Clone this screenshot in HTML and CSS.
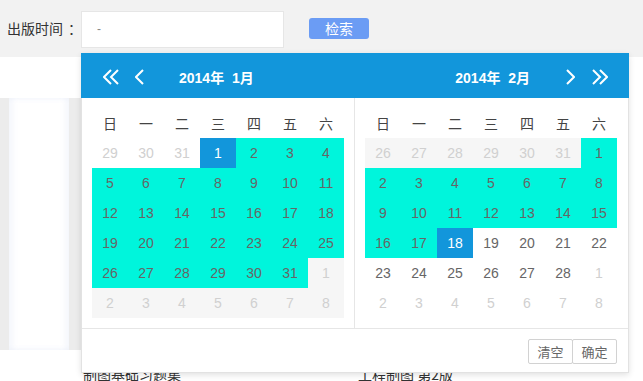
FILE: index.html
```html
<!DOCTYPE html>
<html lang="zh">
<head>
  <meta charset="UTF-8">
  <title>图书检索</title>
  <link rel="stylesheet" href="styles.css">
</head>
<body>
<div class="search-bar">
  <label class="search-label">出版时间<span class="colon">：</span></label>
  <div class="range-input"><span class="range-sep">-</span></div>
  <button class="search-btn">检索</button>
</div>
<div class="strip"></div>

<div class="shelf">
  <div class="shelf-row">
    <div class="cover cover-edge"></div>
    <div class="gutter"></div>
    <div class="cover"></div>
    <div class="gutter"></div>
    <div class="cover"></div>
    <div class="gutter"></div>
  </div>
  <div class="titles">
    <div class="title title-1">制图基础习题集</div>
    <div class="title title-2">工程制图 第2版</div>
  </div>
</div>

<!-- 日期范围选择弹层 -->
<div class="picker">
  <div class="picker-head">
    <div class="head-half">
      <svg class="arrow-dbl" viewBox="0 0 16 16"><polyline points="8,1 1,8 8,15"/><polyline points="15,1 8,8 15,15"/></svg>
      <svg class="arrow-one prev" viewBox="0 0 9 16"><polyline points="8,1 1,8 8,15"/></svg>
      <span class="ym ym-left">2014年&nbsp;&nbsp;1月</span>
    </div>
    <div class="head-half head-right">
      <span class="ym">2014年&nbsp;&nbsp;2月</span>
      <svg class="arrow-one next" viewBox="0 0 9 16"><polyline points="1,1 8,8 1,15"/></svg>
      <svg class="arrow-dbl" viewBox="0 0 16 16"><polyline points="1,1 8,8 1,15"/><polyline points="8,1 15,8 8,15"/></svg>
    </div>
  </div>

  <div class="picker-body">
    <div class="panel panel-left">
      <div class="grid">
        <div class="wk">日</div><div class="wk">一</div><div class="wk">二</div><div class="wk">三</div><div class="wk">四</div><div class="wk">五</div><div class="wk">六</div>
        <div class="d o">29</div><div class="d o">30</div><div class="d o">31</div><div class="d sel">1</div><div class="d in">2</div><div class="d in">3</div><div class="d in">4</div>
        <div class="d in">5</div><div class="d in">6</div><div class="d in">7</div><div class="d in">8</div><div class="d in">9</div><div class="d in">10</div><div class="d in">11</div>
        <div class="d in">12</div><div class="d in">13</div><div class="d in">14</div><div class="d in">15</div><div class="d in">16</div><div class="d in">17</div><div class="d in">18</div>
        <div class="d in">19</div><div class="d in">20</div><div class="d in">21</div><div class="d in">22</div><div class="d in">23</div><div class="d in">24</div><div class="d in">25</div>
        <div class="d in">26</div><div class="d in">27</div><div class="d in">28</div><div class="d in">29</div><div class="d in">30</div><div class="d in">31</div><div class="d og">1</div>
        <div class="d og">2</div><div class="d og">3</div><div class="d og">4</div><div class="d og">5</div><div class="d og">6</div><div class="d og">7</div><div class="d og">8</div>
      </div>
    </div>
    <div class="panel panel-right">
      <div class="grid">
        <div class="wk">日</div><div class="wk">一</div><div class="wk">二</div><div class="wk">三</div><div class="wk">四</div><div class="wk">五</div><div class="wk">六</div>
        <div class="d og">26</div><div class="d og">27</div><div class="d og">28</div><div class="d og">29</div><div class="d og">30</div><div class="d og">31</div><div class="d in">1</div>
        <div class="d in">2</div><div class="d in">3</div><div class="d in">4</div><div class="d in">5</div><div class="d in">6</div><div class="d in">7</div><div class="d in">8</div>
        <div class="d in">9</div><div class="d in">10</div><div class="d in">11</div><div class="d in">12</div><div class="d in">13</div><div class="d in">14</div><div class="d in">15</div>
        <div class="d in">16</div><div class="d in">17</div><div class="d sel">18</div><div class="d">19</div><div class="d">20</div><div class="d">21</div><div class="d">22</div>
        <div class="d">23</div><div class="d">24</div><div class="d">25</div><div class="d">26</div><div class="d">27</div><div class="d">28</div><div class="d o">1</div>
        <div class="d o">2</div><div class="d o">3</div><div class="d o">4</div><div class="d o">5</div><div class="d o">6</div><div class="d o">7</div><div class="d o">8</div>
      </div>
    </div>
  </div>

  <div class="picker-foot">
    <span class="foot-btn">清空</span><span class="foot-btn">确定</span>
  </div>
</div>
</body>
</html>
```

FILE: styles.css
```css
* { box-sizing: border-box; }
body {
  margin: 0;
  font-family: "Liberation Sans", "Noto Sans CJK SC", sans-serif;
  font-size: 14px;
  color: #333;
  background: #fff;
  overflow: hidden;
  height: 381px;
  position: relative;
}
.search-bar {
  height: 57px;
  background: #f2f2f2;
  display: flex;
  align-items: center;
  padding-left: 7px;
}
.search-label {
  width: 74px;
  font-family: "Noto Sans CJK SC", sans-serif;
  font-size: 14px;
  color: #333;
  margin-top: -1px;
  white-space: nowrap;
}
.colon {
  margin-left: 5px;
}
.range-input {
  width: 203px;
  height: 37px;
  background: #fff;
  border: 1px solid #e6e6e6;
  display: flex;
  align-items: center;
  padding-left: 15px;
  margin-top: 1px;
}
.range-sep {
  color: #888;
  font-size: 12px;
}
.search-btn {
  margin-left: 25px;
  width: 60px;
  height: 21px;
  border: none;
  border-radius: 3px;
  background: #6b9cf4;
  color: #fff;
  font-family: "Noto Sans CJK SC", sans-serif;
  font-size: 14px;
  line-height: 21px;
  padding: 0;
  margin-top: -1px;
}
.strip {
  height: 41px;
}
.shelf-row {
  display: flex;
  height: 252px;
}
.cover {
  width: 215px;
  background: #ececec;
}
.cover-edge {
  width: 9px;
}
.gutter {
  width: 60px;
  background: #fff;
  box-shadow: inset 4px 0 5px rgba(215, 225, 245, 0.25), inset -4px 0 5px rgba(215, 225, 245, 0.25);
}
.titles {
  display: flex;
  padding-top: 14px;
  line-height: 20px;
}
.title {
  font-family: "Noto Sans CJK SC", sans-serif;
  color: #333;
}
.title-1 { margin-left: 83px; width: 275px; }

/* picker */
.picker {
  position: absolute;
  left: 81px;
  top: 53px;
  width: 548px;
  background: #fff;
  border: 1px solid #e2e2e2;
  border-top: none;
  box-shadow: 0 2px 6px rgba(0, 0, 0, 0.12);
}
.picker-head {
  height: 45px;
  background: #1296db;
  display: flex;
  margin: 0 -1px;
  padding: 0 1px;
}
.head-half {
  width: 273px;
  display: flex;
  align-items: center;
  padding-left: 21px;
}
.head-right {
  justify-content: flex-end;
  padding-left: 0;
  padding-right: 20px;
}
.picker-head svg {
  height: 16px;
  fill: none;
  stroke: #fff;
  stroke-width: 2;
  margin-top: 2px;
}
.arrow-dbl { width: 16px; }
.arrow-one { width: 9px; }
.prev { margin-left: 16px; }
.next { margin-right: 17px; }
.ym {
  color: #fff;
  font-weight: bold;
  font-size: 14px;
  margin-top: 2px;
}
.ym-left { margin-left: 35px; }
.head-right .ym { margin-right: 36px; }

.picker-body {
  display: flex;
  height: 230px;
}
.panel {
  width: 273px;
  padding: 10px 0 0 10px;
}
.panel-left {
  border-right: 1px solid #e6e6e6;
}
.grid {
  display: grid;
  grid-template-columns: repeat(7, 36px);
  grid-auto-rows: 30px;
}
.wk, .d {
  display: flex;
  align-items: center;
  justify-content: center;
}
.wk {
  font-family: "Noto Sans CJK SC", sans-serif;
  color: #444;
  font-size: 14px;
}
.d {
  color: #666;
  font-size: 14px;
}
.d.in { background: #00f5dc; }
.d.sel { background: #1296db; color: #fff; }
.d.o { color: #d0d0d0; }
.d.og { color: #d0d0d0; background: #f6f6f6; }

.picker-foot {
  height: 44px;
  border-top: 1px solid #e6e6e6;
  display: flex;
  justify-content: flex-end;
  align-items: flex-start;
  padding: 10px 11px 0 0;
}
.foot-btn {
  width: 45px;
  height: 25px;
  border: 1px solid #d2d2d2;
  border-radius: 2px;
  display: flex;
  align-items: center;
  justify-content: center;
  font-family: "Noto Sans CJK SC", sans-serif;
  font-size: 13px;
  color: #666;
}
.foot-btn + .foot-btn {
  margin-left: -1px;
}
```
